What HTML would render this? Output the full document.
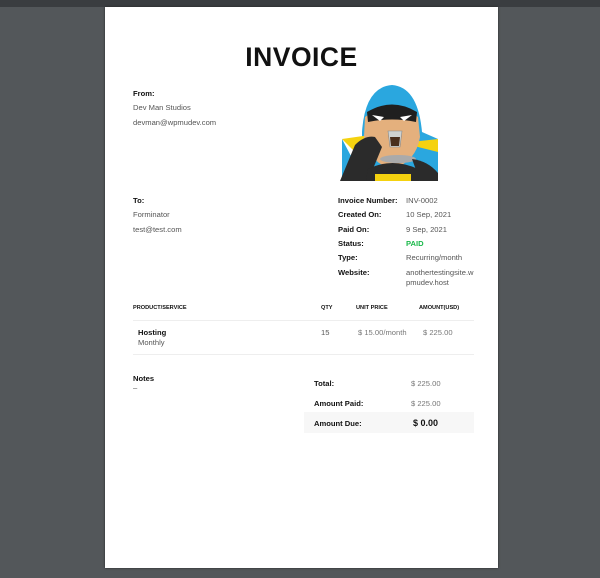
<!DOCTYPE html>
<html><head><meta charset="utf-8"><style>
body{margin:0;width:600px;height:578px;background:#53575a;position:relative;overflow:hidden;font-family:"Liberation Sans",Arial,sans-serif}
.top{position:absolute;left:0;top:0;width:600px;height:7px;background:#3a3d40}
.page{position:absolute;left:105px;top:7px;width:393px;height:561px;background:#fff;box-shadow:0 0 2px #222}
.t{position:absolute;font-size:7.6px;color:#555;white-space:nowrap}
.b{font-weight:bold;color:#111}
.h{font-size:5.6px;font-weight:bold;color:#111}
</style></head><body>
<div class="top"></div>
<div class="page">
<div class="t b" style="left:0;width:393px;text-align:center;top:35px;font-size:26.5px;letter-spacing:0.5px">INVOICE</div>
<div class="t b" style="left:28px;top:82px">From:</div>
<div class="t" style="left:28px;top:96px">Dev Man Studios</div>
<div class="t" style="left:28px;top:111px">devman@wpmudev.com</div>
<svg style="position:absolute;left:235px;top:70px" width="100" height="105" viewBox="0 0 100 105">
<path d="M22 100 L22 55 Q25 10 52 8 Q78 10 82 55 L98 62 L98 104 L2 104 L2 62 Z" fill="#2aa7df"/>
<path d="M2 62 L30 58 L40 70 L20 80 Z" fill="#f5d20f"/>
<path d="M62 66 L98 62 L98 75 Z" fill="#f5d20f"/>
<path d="M25 40 Q52 20 78 40 L80 60 Q76 85 52 92 Q28 85 24 60 Z" fill="#e4b07d"/>
<path d="M27 35 Q52 20 77 35 L76 45 Q52 40 28 45 Z" fill="#1f1f1f"/>
<path d="M32 38 L44 40 L40 44 Z M60 40 L72 38 L64 44 Z" fill="#fff"/>
<path d="M0 104 L15 68 Q25 58 35 60 L42 70 L28 104 Z" fill="#2b2b2b"/>
<path d="M48 54 L62 54 L60 70 L50 70 Z" fill="#cfd2d0" stroke="#888" stroke-width="0.6"/>
<path d="M50 60 L60 60 L59 69 L51 69 Z" fill="#4a2f1c"/>
<ellipse cx="58" cy="82" rx="18" ry="4" fill="#aaa"/>
<path d="M28 92 Q52 80 78 92 L80 104 L26 104 Z" fill="#2b2b2b"/>
<path d="M35 97 h36 v7 h-36 Z" fill="#f5d20f"/>
<path d="M72 82 Q88 84 98 96 L98 104 L80 104 Z" fill="#2b2b2b"/>
</svg>
<div class="t b" style="left:28px;top:189px">To:</div>
<div class="t" style="left:28px;top:203px">Forminator</div>
<div class="t" style="left:28px;top:218px">test@test.com</div>
<div class="t b" style="left:233px;top:189px">Invoice Number:</div><div class="t" style="left:301px;top:189px">INV-0002</div>
<div class="t b" style="left:233px;top:203px">Created On:</div><div class="t" style="left:301px;top:203px">10 Sep, 2021</div>
<div class="t b" style="left:233px;top:218px">Paid On:</div><div class="t" style="left:301px;top:218px">9 Sep, 2021</div>
<div class="t b" style="left:233px;top:232px">Status:</div><div class="t b" style="left:301px;top:232px;color:#1ab94a">PAID</div>
<div class="t b" style="left:233px;top:246px">Type:</div><div class="t" style="left:301px;top:246px">Recurring/month</div>
<div class="t b" style="left:233px;top:261px">Website:</div><div class="t" style="left:301px;top:261px;line-height:10px">anothertestingsite.w<br>pmudev.host</div>
<div class="t h" style="left:28px;top:298px">PRODUCT/SERVICE</div>
<div class="t h" style="left:216px;top:298px">QTY</div>
<div class="t h" style="left:251px;top:298px">UNIT PRICE</div>
<div class="t h" style="left:314px;top:298px">AMOUNT(USD)</div>
<div style="position:absolute;left:28px;top:313px;width:341px;height:1px;background:#eee"></div>
<div class="t b" style="left:33px;top:321px">Hosting</div>
<div class="t" style="left:33px;top:331px">Monthly</div>
<div class="t" style="left:216px;top:321px">15</div>
<div class="t" style="left:253px;top:321px;color:#777">$ 15.00/month</div>
<div class="t" style="left:318px;top:321px;color:#777">$ 225.00</div>
<div style="position:absolute;left:28px;top:347px;width:341px;height:1px;background:#eee"></div>
<div class="t b" style="left:28px;top:367px">Notes</div>
<div class="t" style="left:28px;top:376px">–</div>
<div class="t b" style="left:209px;top:372px">Total:</div><div class="t" style="left:306px;top:372px;color:#777">$ 225.00</div>
<div class="t b" style="left:209px;top:392px">Amount Paid:</div><div class="t" style="left:306px;top:392px;color:#777">$ 225.00</div>
<div style="position:absolute;left:199px;top:405px;width:170px;height:21px;background:#f7f7f7"></div>
<div class="t b" style="left:209px;top:412px">Amount Due:</div><div class="t b" style="left:308px;top:411px;font-size:9px">$ 0.00</div>
</div>
</body></html>
